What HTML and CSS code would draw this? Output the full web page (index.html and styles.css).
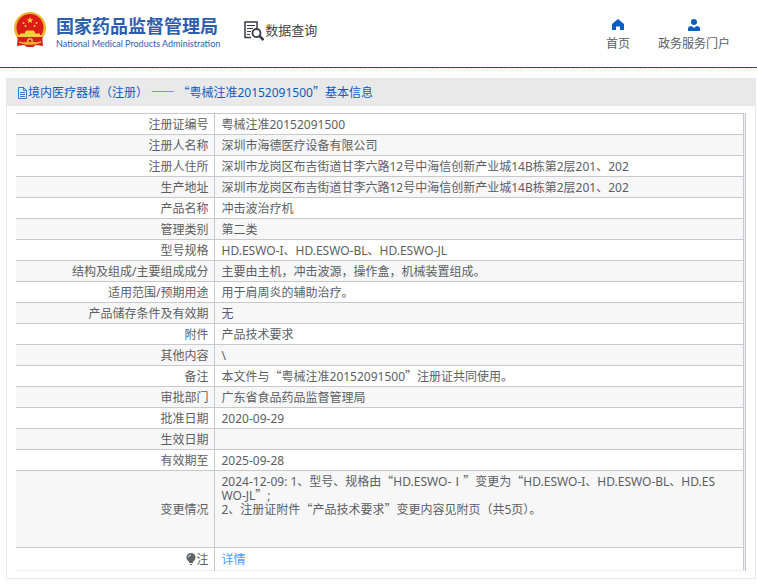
FILE: index.html
```html
<!DOCTYPE html>
<html lang="zh-CN">
  <head>
    <meta charset="utf-8" />
    <title>国家药品监督管理局 - 数据查询</title>
    <meta name="viewport" content="width=device-width, initial-scale=1.0" />
    <link rel="stylesheet" href="styles.css">
  </head>
  <body>
    <header class="header">
      <a class="logo" href="#">
        <svg class="emblem" viewBox="0 0 34 36" aria-hidden="true">
          <path d="M5 23h24l1 11-7-1-3 2h-6l-3-2-7 1z" fill="#d41f1c" />
          <circle cx="17" cy="16" r="16" fill="#e9b52d" />
          <circle cx="17" cy="15.500" r="13.500" fill="#dc1a16" />
          <path d="M17 5l.9 2.300h2.500l-2 1.500.8 2.500-2.200-1.500-2.200 1.500.8-2.500-2-1.500h2.500z" fill="#f9cf3b" />
          <g fill="#f9cf3b">
            <circle cx="10.500" cy="11" r="1" />
            <circle cx="12.500" cy="14" r="1" />
            <circle cx="23.500" cy="11" r="1" />
            <circle cx="21.500" cy="14" r="1" />
            <path d="M12 20l1.500-1.500h7L22 20v1.500h5v1.500h2V25H5v-2h2v-1.500h5z" />
          </g>
          <path d="M4 25h26l-3 5H7z" fill="#d41f1c" />
          <circle cx="17" cy="29" r="3" fill="#e9b52d" />
          <circle cx="17" cy="29" r="1.300" fill="#d41f1c" />
          <path d="M6 30l7 2M28 30l-7 2M13 32h8" stroke="#e9b52d" stroke-width="1.500" />
        </svg>
        <span class="logo-text">
          <strong class="logo-cn">国家药品监督管理局</strong>
          <span class="logo-en">National Medical Products Administration</span>
        </span>
      </a>
      <a class="query" href="#">
        <svg class="query-icon" viewBox="0 0 20 20" aria-hidden="true" fill="none" stroke="#3b3b4b">
          <path d="M7 16.500H1V1h12v6" stroke-width="1.500" />
          <path d="M3 4.500h8M3 7.500h6M3 10.500h4M3 13.500h3" />
          <circle cx="12.500" cy="12" r="4" stroke-width="1.800" />
          <path d="M15.500 15l4 4" stroke-width="2.500" />
        </svg>
        数据查询
      </a>
      <nav class="nav">
        <a class="nav-item" href="#">
          <svg class="nav-icon" viewBox="0 0 12 12" aria-hidden="true">
            <path d="M6 0l6 5v6H8V7.500H4V11H0V5z" fill="#0a5ec2" />
          </svg>
          首页
        </a>
        <a class="nav-item" href="#">
          <svg class="nav-icon" viewBox="0 0 12 12" aria-hidden="true">
            <circle cx="6" cy="3" r="3" fill="#0a5ec2" />
            <path d="M0 12V9.500C0 8 1.500 7 3.500 7L6 9l2.500-2C10.500 7 12 8 12 9.500V12z" fill="#0a5ec2" />
          </svg>
          政务服务门户
        </a>
      </nav>
    </header>

    <main class="panel">
      <h1 class="panel-title">
        <svg class="doc-icon" viewBox="0 0 11 12" aria-hidden="true" fill="none" stroke="#0a5ec2">
          <path d="M1.500.5h5l3 3v8h-8zM6.500.5v3h3M3 5.500h5M3 7.500h5M3 9.500h5" stroke-width=".8" />
        </svg>
        <span>境内医疗器械（注册）<span class="cjk"> —— “</span>粤械注准20152091500<span class="cjk">”</span>基本信息</span>
      </h1>
      <div class="table-wrap">
        <table class="info">
          <tbody>
            <tr><th scope="row">注册证编号</th><td>粤械注准20152091500</td></tr>
            <tr><th scope="row">注册人名称</th><td>深圳市海德医疗设备有限公司</td></tr>
            <tr><th scope="row">注册人住所</th><td>深圳市龙岗区布吉街道甘李六路12号中海信创新产业城14B栋第2层201、202</td></tr>
            <tr><th scope="row">生产地址</th><td>深圳市龙岗区布吉街道甘李六路12号中海信创新产业城14B栋第2层201、202</td></tr>
            <tr><th scope="row">产品名称</th><td>冲击波治疗机</td></tr>
            <tr><th scope="row">管理类别</th><td>第二类</td></tr>
            <tr><th scope="row">型号规格</th><td>HD.ESWO-I、HD.ESWO-BL、HD.ESWO-JL</td></tr>
            <tr><th scope="row">结构及组成/主要组成成分</th><td>主要由主机，冲击波源，操作盒，机械装置组成。</td></tr>
            <tr><th scope="row">适用范围/预期用途</th><td>用于肩周炎的辅助治疗。</td></tr>
            <tr><th scope="row">产品储存条件及有效期</th><td>无</td></tr>
            <tr><th scope="row">附件</th><td>产品技术要求</td></tr>
            <tr><th scope="row">其他内容</th><td>\</td></tr>
            <tr><th scope="row">备注</th><td>本文件与<span class="cjk">“</span>粤械注准20152091500<span class="cjk">”</span>注册证共同使用。</td></tr>
            <tr><th scope="row">审批部门</th><td>广东省食品药品监督管理局</td></tr>
            <tr><th scope="row">批准日期</th><td>2020-09-29</td></tr>
            <tr><th scope="row">生效日期</th><td></td></tr>
            <tr><th scope="row">有效期至</th><td>2025-09-28</td></tr>
            <tr class="changes">
              <th scope="row">变更情况</th>
              <td>2024-12-09: 1、型号、规格由<span class="cjk">“</span>HD.ESWO-Ⅰ<span class="cjk">”</span>变更为<span class="cjk">“</span>HD.ESWO-I、HD.ESWO-BL、HD.ESWO-JL<span class="cjk">”</span>;<br>2、注册证附件<span class="cjk">“</span>产品技术要求<span class="cjk">”</span>变更内容见附页（共5页）。</td>
            </tr>
            <tr class="note">
              <th scope="row">
                <svg class="bulb" viewBox="0 0 10 12" aria-hidden="true">
                  <circle cx="5" cy="4.500" r="4.500" fill="#606266" />
                  <path d="M3 8h4v2H3zM4 11h2v1H4z" fill="#606266" />
                  <path d="M2.500 4.500A2.500 2.500 0 0 1 5 2" fill="none" stroke="#fff" stroke-width=".8" />
                </svg>注
              </th>
              <td><a class="detail" href="#">详情</a></td>
            </tr>
          </tbody>
        </table>
      </div>
    </main>
  </body>
</html>
```
FILE: styles.css
```css
* {
  box-sizing: border-box;
}
body {
  font-family: "Noto Sans", "Noto Sans CJK SC", sans-serif;
  font-size: 12px;
  line-height: 14px;
  color: #5c5e63;
  background: #fff;
  margin: 0;
}
a {
  color: inherit;
  text-decoration: none;
}
/* full-width quotes and dashes */
.cjk {
  font-family: "Noto Sans CJK SC", sans-serif;
  line-height: 1px;
}
.header {
  display: flex;
  align-items: flex-start;
  height: 72px;
  padding: 12px 27px 0 13px;
  background: linear-gradient(#0a55a5, #0a55a5) 0 67px / 100% 1px no-repeat,
    repeating-linear-gradient(135deg, #ededed 0 1px, #fff 1px 3px) 0 68px / 100% 3px no-repeat;
}
.logo {
  display: flex;
  gap: 9px;
  color: #2d5eae;
}
.emblem {
  width: 34px;
  height: 36px;
}
.logo-text {
  display: flex;
  flex-direction: column;
  padding-top: 4px;
  white-space: nowrap;
}
.logo-cn {
  font-size: 18px;
  line-height: 20px;
}
.logo-en {
  font-family: Lato, "Liberation Sans", sans-serif;
  font-size: 9px;
  line-height: 16px;
}
.query {
  display: flex;
  gap: 1px;
  margin: 9px 0 0 24px;
  font-size: 13px;
  line-height: 18px;
  color: #44444c;
  white-space: nowrap;
}
.query-icon {
  width: 20px;
  height: 20px;
}
.nav {
  display: flex;
  gap: 28px;
  margin-left: auto;
  padding-top: 7px;
}
.nav-item {
  display: flex;
  flex-direction: column;
  align-items: center;
  gap: 6px;
  white-space: nowrap;
}
.nav-icon {
  width: 12px;
  height: 12px;
}
.panel {
  margin: 6px 1px 6px 6px;
  border: 1px solid #e9e9e9;
}
.panel-title {
  display: flex;
  align-items: center;
  margin: 0;
  height: 27px;
  padding-left: 10px;
  background: #e9e9e9;
  font-size: 12px;
  font-weight: 400;
  color: #0a5ec2;
}
.doc-icon {
  width: 11px;
  height: 12px;
}
.table-wrap {
  margin: 7px 9px;
  padding-right: 1px;
  background: #ebeef5;
  border-right: 1px solid #c8c9cc;
}
.info {
  width: 100%;
  border-collapse: collapse;
  background: #fff;
  border-right: 1px solid #c8c9cc;
}
.info tr {
  height: 21px;
}
.info tr:nth-child(even) {
  background: #f7f7f7;
}
.info th,
.info td {
  border-top: 1px solid #c8c9cc;
  padding: 4px 7px 2px;
  text-align: left;
  word-break: break-all;
}
.info th {
  width: 198px;
  padding-right: 5px;
  border-right: 1px solid #c8c9cc;
  font-weight: 400;
  text-align: right;
}
.info .changes {
  height: 77px;
}
.info .changes td {
  padding-right: 20px;
  vertical-align: top;
}
.info .note {
  height: 23px;
  border-bottom: 1px solid #ebeef5;
}
.bulb {
  width: 10px;
  height: 12px;
  vertical-align: -1px;
}
.detail {
  color: #409eff;
}
```
